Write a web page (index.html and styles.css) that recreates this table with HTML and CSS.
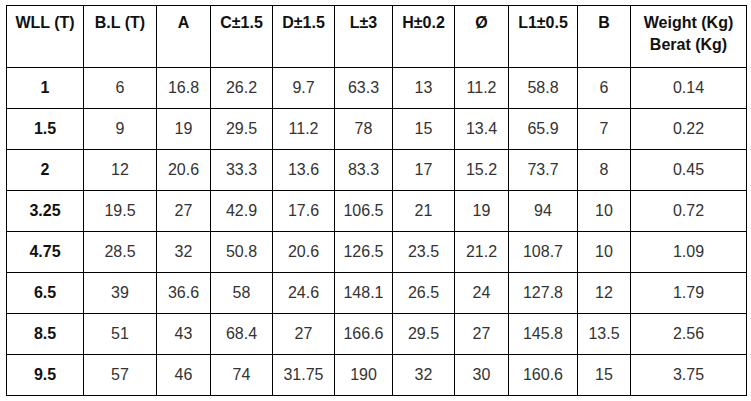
FILE: index.html
```html
<!DOCTYPE html>
<html>
<head>
<meta charset="utf-8">
<link rel="stylesheet" href="styles.css">
</head>
<body>
<table class="spec">
  <colgroup>
    <col class="c-wll"><col class="c-bl"><col class="c-a"><col class="c-c"><col class="c-d"><col class="c-l"><col class="c-h"><col class="c-o"><col class="c-l1"><col class="c-b"><col class="c-w">
  </colgroup>
  <thead>
    <tr>
      <th>WLL (T)</th><th>B.L (T)</th><th>A</th><th>C±1.5</th><th>D±1.5</th><th>L±3</th><th>H±0.2</th><th>Ø</th><th>L1±0.5</th><th>B</th><th>Weight (Kg)<br>Berat (Kg)</th>
    </tr>
  </thead>
  <tbody>
    <tr><th>1</th><td>6</td><td>16.8</td><td>26.2</td><td>9.7</td><td>63.3</td><td>13</td><td>11.2</td><td>58.8</td><td>6</td><td>0.14</td></tr>
    <tr><th>1.5</th><td>9</td><td>19</td><td>29.5</td><td>11.2</td><td>78</td><td>15</td><td>13.4</td><td>65.9</td><td>7</td><td>0.22</td></tr>
    <tr><th>2</th><td>12</td><td>20.6</td><td>33.3</td><td>13.6</td><td>83.3</td><td>17</td><td>15.2</td><td>73.7</td><td>8</td><td>0.45</td></tr>
    <tr><th>3.25</th><td>19.5</td><td>27</td><td>42.9</td><td>17.6</td><td>106.5</td><td>21</td><td>19</td><td>94</td><td>10</td><td>0.72</td></tr>
    <tr><th>4.75</th><td>28.5</td><td>32</td><td>50.8</td><td>20.6</td><td>126.5</td><td>23.5</td><td>21.2</td><td>108.7</td><td>10</td><td>1.09</td></tr>
    <tr><th>6.5</th><td>39</td><td>36.6</td><td>58</td><td>24.6</td><td>148.1</td><td>26.5</td><td>24</td><td>127.8</td><td>12</td><td>1.79</td></tr>
    <tr><th>8.5</th><td>51</td><td>43</td><td>68.4</td><td>27</td><td>166.6</td><td>29.5</td><td>27</td><td>145.8</td><td>13.5</td><td>2.56</td></tr>
    <tr><th>9.5</th><td>57</td><td>46</td><td>74</td><td>31.75</td><td>190</td><td>32</td><td>30</td><td>160.6</td><td>15</td><td>3.75</td></tr>
  </tbody>
</table>
</body>
</html>
```
FILE: styles.css
```css
html, body {
  margin: 0;
  padding: 0;
  background: #fff;
}
body {
  padding: 5px 0 0 6px;
  font-family: "Liberation Sans", Arial, sans-serif;
  font-size: 16px;
  line-height: 1.4;
  color: #333;
}
.spec {
  border-collapse: collapse;
  table-layout: fixed;
  width: 741px;
}
.c-wll { width: 77px; }
.c-bl { width: 73px; }
.c-a { width: 54px; }
.c-c { width: 62px; }
.c-d { width: 62px; }
.c-l { width: 58px; }
.c-h { width: 62px; }
.c-o { width: 54px; }
.c-l1 { width: 69px; }
.c-b { width: 53px; }
.c-w { width: 116px; }
.spec th, .spec td {
  border: 1px solid #000;
  text-align: center;
  padding: 0 2px;
}
.spec th {
  font-weight: bold;
  color: #111;
}
.spec thead th {
  vertical-align: top;
  height: 62px;
  padding-top: 6px;
  box-sizing: border-box;
}
.spec tbody tr {
  height: 41px;
}
.spec tbody th, .spec tbody td {
  vertical-align: middle;
}
```
